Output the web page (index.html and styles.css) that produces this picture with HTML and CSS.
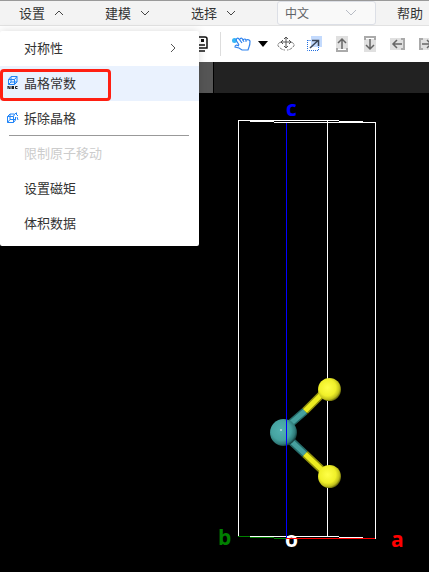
FILE: index.html
```
<!DOCTYPE html>
<html lang="zh-CN">
<head>
<meta charset="utf-8">
<meta name="viewport" content="width=device-width, initial-scale=1">
<title>晶体结构</title>
<link rel="stylesheet" href="styles.css">
</head>
<body>
<nav class="menubar">
  <div class="menu-group">
    <button class="menu-button" type="button" aria-expanded="true">设置
      <svg class="chevron" viewBox="0 0 10 10"><path d="M1 7L5 3L9 7"/></svg>
    </button>
    <div class="dropdown">
      <button class="item" type="button"><span class="item-icon"></span>对称性
        <svg class="arrow" viewBox="0 0 6 10"><path d="M1 1L5 5L1 9"/></svg>
      </button>
      <button class="item active" type="button">
        <svg class="item-icon" viewBox="0 0 12 14"><path class="blue" d="M1.500 3.500H7.500V8.500H1.500ZM1.500 3.500L4 .5H10V6L7.500 8.500M7.500 3.500L10 .5M4 1V6H10M1.500 8.500L4 6"/><path class="ink" d="M1 13V10L3 13V10M5 10V13M5 10.500H7M5 11.500H7M5 12.500H7M10.500 10.500H8.500V12.500H10.500"/></svg>
        晶格常数
      </button>
      <button class="item" type="button">
        <svg class="item-icon" viewBox="0 0 12 14"><path class="blue" d="M.5 5.500H6.500V11.500H.5ZM.5 5.500L3 3H7.500L6.500 5.500M6.500 11.500L8.500 9V6M3 3V8.500H8M.5 11.500L3 8.500M8 2L11 5M9.500 1.500V4M10 6L11 9"/></svg>
        拆除晶格
      </button>
      <hr class="divider">
      <button class="item" type="button" disabled><span class="item-icon"></span>限制原子移动</button>
      <button class="item" type="button"><span class="item-icon"></span>设置磁矩</button>
      <button class="item" type="button"><span class="item-icon"></span>体积数据</button>
    </div>
  </div>
  <button class="menu-button" type="button">建模
    <svg class="chevron" viewBox="0 0 10 10"><path d="M1 3L5 7L9 3"/></svg>
  </button>
  <button class="menu-button" type="button">选择
    <svg class="chevron" viewBox="0 0 10 10"><path d="M1 3L5 7L9 3"/></svg>
  </button>
  <div class="language">
    <select aria-label="语言"><option>中文</option></select>
    <svg class="chevron" viewBox="0 0 10 10"><path d="M0 2L5 7L10 2"/></svg>
  </div>
  <button class="menu-button" type="button">帮助</button>
</nav>

<div class="toolbar">
  <button class="tool" type="button" aria-label="列表">
    <svg viewBox="0 0 18 18"><path d="M3 2H13Q15 2 15 4V13H3ZM6 10H13M5 16H13" fill="none" stroke="#111" stroke-width="1.500"/><path d="M9 4H12V7H9Z" fill="#111"/></svg>
  </button>
  <span class="separator"></span>
  <button class="tool hand" type="button" aria-label="拖动">
    <svg viewBox="0 0 20 18"><circle cx="3.500" cy="5.500" r="2.500" fill="#38b6f5"/><path d="M8 10L5 5Q6 2 8 4L11 8M9 4Q11 2 12 5Q14 3 15 5Q18 4 19 6Q19 10 18 12L17 15H11L8 13L4 12Q4 9 8 11" fill="none" stroke="#2f83ef" stroke-width="1.200"/><path d="M12 5L13 7M15 5V7" fill="none" stroke="#2f83ef"/></svg>
  </button>
  <button class="caret" type="button" aria-label="更多"><svg viewBox="0 0 10 6"><path d="M0 0H10L5 6Z"/></svg></button>
  <button class="tool" type="button" aria-label="旋转">
    <svg viewBox="0 0 18 18"><path d="M9 2V13M5 7H13M7 4L9 2L11 4M7 11L9 13L11 11M6 5L4 7L6 9M12 5L14 7L12 9" fill="none" stroke="#555"/><path d="M4 7Q-1 9 2 12Q5 15 8 15M14 7Q19 9 16 12Q13 15 10 15" fill="none" stroke="#777" stroke-dasharray="3 1"/></svg>
  </button>
  <button class="tool" type="button" aria-label="缩放">
    <svg viewBox="0 0 18 18"><path d="M6 1H17V12H6Z" fill="#c3dafd"/><path d="M2.500 5V15.500H13.500V12M2.500 5.500H6" fill="none" stroke="#1e6de0" stroke-dasharray="1 1"/><path d="M5 13L13 5.500M7 5.500H13.500V11" fill="none" stroke="#3c4656" stroke-width="1.500"/></svg>
  </button>
  <button class="tool" type="button" aria-label="上移">
    <svg viewBox="0 0 18 18"><path class="pale" d="M3 1H15V14H3Z"/><path class="bracket" d="M4 13V16H14V13"/><path class="stem" d="M9 14V4M5 8L9 4L13 8"/></svg>
  </button>
  <button class="tool" type="button" aria-label="下移">
    <svg viewBox="0 0 18 18"><path class="pale" d="M3 4H15V17H3Z"/><path class="bracket" d="M4 5V2H14V5"/><path class="stem" d="M9 4V14M5 10L9 14L13 10"/></svg>
  </button>
  <button class="tool" type="button" aria-label="左移">
    <svg viewBox="0 0 18 18"><path class="pale" d="M1 3H14V15H1Z"/><path class="bracket" d="M12 4H15V14H12"/><path class="stem" d="M13 9H4M8 5L4 9L8 13"/></svg>
  </button>
  <button class="tool" type="button" aria-label="右移">
    <svg viewBox="0 0 18 18"><path class="pale" d="M4 3H17V15H4Z"/><path class="bracket" d="M6 4H3V14H6"/><path class="stem" d="M5 9H14M10 5L14 9L10 13"/></svg>
  </button>
</div>

<div class="tabs"><div class="tab"></div></div>

<main class="viewer">
  <svg class="scene" viewBox="0 93 429 479" role="img" aria-label="晶胞">
    <defs>
      <radialGradient id="metal" cx="0.42" cy="0.42" r="0.6"><stop offset="0" stop-color="#52b2b1"/><stop offset="0.6" stop-color="#46a3a1"/><stop offset="0.85" stop-color="#307b7a"/><stop offset="1" stop-color="#133c3b"/></radialGradient>
      <radialGradient id="sulfur" cx="0.42" cy="0.42" r="0.6"><stop offset="0" stop-color="#ffff48"/><stop offset="0.6" stop-color="#f0f029"/><stop offset="0.85" stop-color="#c0c01b"/><stop offset="1" stop-color="#66660b"/></radialGradient>
    </defs>
    <g class="cell">
      <path d="M238.500 537V120.500H338.500M250 121.500H274M274 122.500H375.500V538.500M339 121.500H363M327.500 121V536M250 536.500H339M339 537.500H363"/>
      <path class="axis-b" d="M238 536.500H250M250 537.500H274M274 538.500H286"/>
    </g>
    <g class="bonds">
      <path stroke="#256b69" d="M290 424L305 411M290 440L305 454"/><path stroke="#91910d" d="M305 411L322 394M305 454L322 470"/>
      <path class="mid" stroke="#46a09e" d="M290 424L305 411M290 440L305 454"/><path class="mid" stroke="#eded20" d="M305 411L322 394M305 454L322 470"/>
    </g>
    <circle cx="283.500" cy="432.500" r="13.500" fill="url(#metal)"/>
    <circle cx="281" cy="430" r="1" fill="#b5dfdd"/>
    <circle cx="329.500" cy="389.500" r="11.500" fill="url(#sulfur)"/>
    <circle cx="329.500" cy="476.500" r="11.500" fill="url(#sulfur)"/>
    <text class="label-o" x="285" y="547">o</text>
    <g class="cell"><path class="axis-c" d="M286.500 123V538"/><path class="axis-a" d="M286 538.500H375"/></g>
    <text class="label-c" x="286" y="116">c</text>
    <text class="label-b" x="218" y="545">b</text>
    <text class="label-a" x="391" y="547">a</text>
  </svg>
</main>
</body>
</html>
```
FILE: styles.css
```
*, *::after { box-sizing: border-box; }

body {
  margin: 0;
  min-height: 100vh;
  display: flex;
  flex-direction: column;
  overflow: hidden;
  background: #000;
  color: #333;
  font: 13px/20px "Noto Sans CJK SC", sans-serif;
}

button, select {
  border: 0;
  padding: 0;
  background: none;
  color: inherit;
  font: inherit;
}

svg { display: block; flex: none; }

.menubar {
  display: flex;
  align-items: center;
  gap: 41px;
  height: 26px;
  padding-left: 19px;
  border-top: 1px solid #999;
  border-bottom: 1px solid #e2e2e2;
  background: #f3f3f3;
}

.menu-group { position: relative; }

.menu-button {
  display: flex;
  align-items: center;
  gap: 9px;
  white-space: nowrap;
}

.chevron { width: 10px; height: 10px; fill: none; stroke: #444; }

.language {
  display: flex;
  align-items: center;
  flex: none;
  width: 99px;
  height: 24px;
  margin-right: -20px;
  padding-right: 19px;
  border: 1px solid #dcdfe6;
  border-radius: 3px;
  background: #f9f9f9;
  color: #606266;
}

.language select {
  flex: 1;
  appearance: none;
  padding-left: 7px;
  font-size: 12px;
  outline: 0;
}

.language .chevron { stroke: #b8bcc5; }

.dropdown {
  position: absolute;
  z-index: 2;
  top: 28px;
  left: -19px;
  width: 199px;
  padding-bottom: 5px;
  border-radius: 2px;
  background: #fff;
  box-shadow: 0 0 8px rgba(0, 0, 0, 0.15);
}

.item {
  display: flex;
  align-items: center;
  gap: 5px;
  width: 100%;
  height: 35px;
  padding: 0 23px 2px 7px;
  text-align: left;
}

.item:disabled { color: #ccc; }

.item.active {
  position: relative;
  background: #eaf2fe;
}

.item.active::after {
  content: "";
  position: absolute;
  top: 3px;
  left: 0;
  width: 111px;
  height: 32px;
  border: 3px solid #ff1f12;
  border-radius: 4px;
}

.item-icon { width: 12px; height: 14px; flex: none; fill: none; }
.item-icon .blue { stroke: #2184f7; }
.item-icon .ink { stroke: #222; }

.arrow {
  width: 6px;
  height: 10px;
  margin-left: auto;
  fill: none;
  stroke: #555;
}

.divider {
  height: 1px;
  margin: -1px 10px 0 9px;
  border: 0;
  background: #999;
}

.toolbar {
  display: flex;
  align-items: center;
  gap: 10px;
  height: 36px;
  padding-left: 192px;
  overflow: hidden;
  background: #fff;
}

.tool { flex: none; width: 18px; height: 18px; }
.tool.hand { width: 20px; }

.separator {
  flex: none;
  width: 1px;
  height: 24px;
  background: #ddd;
}

.caret { flex: none; width: 10px; margin: 0 -1px 0 -3px; }
.pale { fill: #e0e0e0; }
.bracket { fill: none; stroke: #aaa; stroke-width: 2; }
.stem { fill: none; stroke: #666; stroke-width: 1.5; }

.tabs { height: 31px; background: #222; }

.tab {
  width: 214px;
  height: 100%;
  border-right: 1px solid #000;
  background: #555;
}

.viewer { flex: 1; background: #000; }
.scene { width: 100%; }
.cell { fill: none; stroke: #fff; shape-rendering: crispEdges; }
.cell .axis-a { stroke: #f00; }
.cell .axis-b { stroke: #008000; }
.cell .axis-c { stroke: #00f; }
.bonds { stroke-width: 8; }
.bonds .mid { stroke-width: 5; }
.scene text { font: bold 21px "Open Sans", sans-serif; }
.label-a { fill: #f00; }
.label-b { fill: #008000; }
.label-c { fill: #00f; }
.label-o { fill: #fff; }
```
